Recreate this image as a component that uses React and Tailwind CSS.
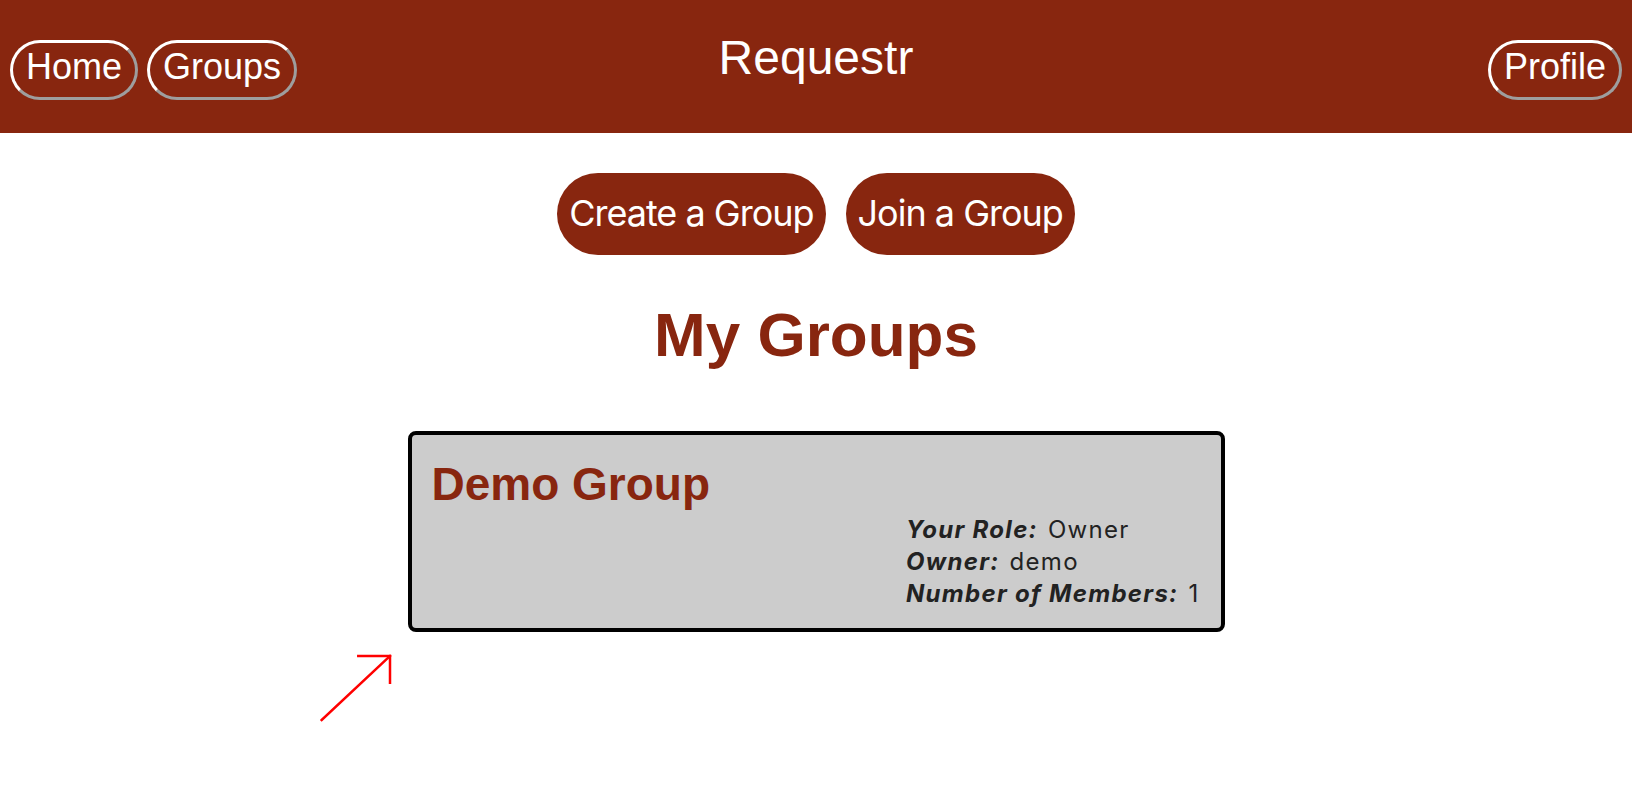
const navBtn =
  "rounded-full border-[3px] border-t-white border-l-white border-r-[#9e9e9e] border-b-[#9e9e9e] px-[13px] pt-[4px] pb-[10px] text-[36px] leading-[40px] text-white";

const actionBtn =
  "rounded-full bg-[#88260f] px-[12px] pt-[18px] pb-[20px] text-[36px] leading-[44px] tracking-[-1px] text-white";

const groups = [{ id: 1, name: "Demo Group", role: "Owner", owner: "demo", members: 1 }];

function GroupCard({ group }) {
  return (
    <div className="w-[817px] rounded-[8px] border-4 border-black bg-[#cccccc] flex flex-col pl-[20px] pr-[21px] pt-[26px] pb-[18px]">
      <h2 className="font-['Liberation_Sans',Arial,sans-serif] font-bold text-[46px] leading-none text-[#88260f]">{group.name}</h2>
      <div className="self-end mt-[7px] font-['Inter',sans-serif] text-[24px] leading-[32px] tracking-[1.3px] text-[#222222]">
        <p><span className="font-bold italic">Your Role:</span><span className="ml-[10px]">{group.role}</span></p>
        <p><span className="font-bold italic">Owner:</span><span className="ml-[10px]">{group.owner}</span></p>
        <p><span className="font-bold italic">Number of Members:</span><span className="ml-[10px]">{group.members}</span></p>
      </div>
    </div>
  );
}

export default function App() {
  return (
    <div className="relative min-h-screen bg-white">
      <header className="h-[133px] bg-[#88260f] px-[10px] grid grid-cols-[1fr_auto_1fr] items-start font-['Liberation_Sans',Arial,sans-serif]">
        <nav className="flex gap-[9px] mt-[40px]">
          <button className={navBtn}>Home</button>
          <button className={navBtn}>Groups</button>
        </nav>
        <h1 className="mt-[34px] text-[48px] leading-[48px] text-white">Requestr</h1>
        <div className="flex justify-end mt-[40px]">
          <button className={navBtn}>Profile</button>
        </div>
      </header>

      <main className="flex flex-col items-center">
        <div className="flex justify-center gap-[20px] mt-[40px] font-['Inter',sans-serif]">
          <button className={actionBtn}>Create a Group</button>
          <button className={actionBtn}>Join a Group</button>
        </div>

        <h1 className="mt-[49px] font-['Liberation_Sans',Arial,sans-serif] font-bold text-[62px] leading-none text-[#88260f]">My Groups</h1>

        <div className="mt-[65px] flex flex-col gap-4">
          {groups.map((g) => (
            <GroupCard key={g.id} group={g} />
          ))}
        </div>
      </main>

      {/* annotation arrow */}
      <svg className="absolute left-[310px] top-[645px]" width="90" height="85" viewBox="0 0 90 85" fill="none" stroke="#ff0000" strokeWidth="2.5" strokeLinecap="square">
        <path d="M11.7 75 L80 11" />
        <path d="M48.3 11 L80 11 L80 37.7" />
      </svg>
    </div>
  );
}
